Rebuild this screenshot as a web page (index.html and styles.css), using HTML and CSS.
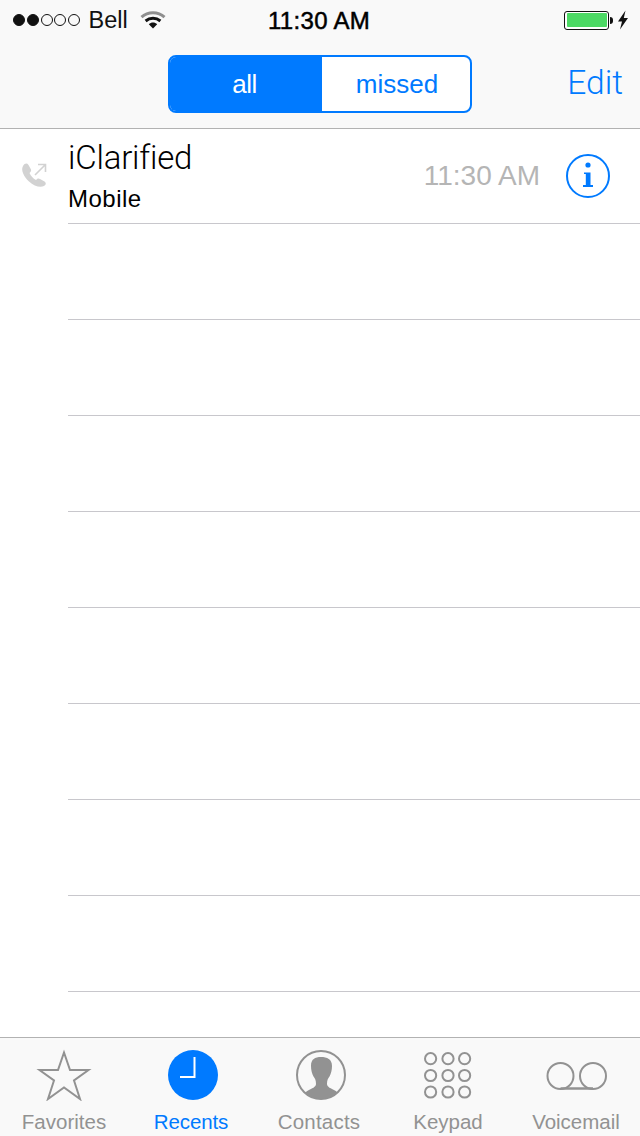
FILE: index.html
```html
<!DOCTYPE html>
<html lang="en">
<head>
<meta charset="utf-8">
<title>Recents</title>
<link rel="stylesheet" href="styles.css">
</head>
<body>
<div class="phone">
  <header class="top">
    <div class="status">
      <div class="status-left">
        <div class="signal"><i class="dot on"></i><i class="dot on"></i><i class="dot"></i><i class="dot"></i><i class="dot"></i></div>
        <span class="carrier">Bell</span>
        <svg class="wifi" width="26" height="20" viewBox="0 0 26 20"><path d="M1.500 7.200C8 1.400 18 1.400 24.500 7.200" fill="none" stroke="#8f8f8f" stroke-width="3"/><path d="M5.600 11C10 7.400 16 7.400 20.400 11" fill="none" stroke="#111" stroke-width="3"/><path d="M8.800 14.200C11.300 12 14.700 12 17.200 14.200L13 18.600Z" fill="#111"/></svg>
      </div>
      <span class="clock">11:30 AM</span>
      <div class="status-right">
        <div class="battery"><div class="battery-fill"></div></div>
        <div class="battery-tip"></div>
        <svg class="bolt" width="12" height="20" viewBox="0 0 12 20"><path d="M8.500 0.500L1 11.500H5L3 19.500L11 8H6.800Z" fill="#111"/></svg>
      </div>
    </div>
    <div class="nav">
      <div class="segments">
        <div class="segment active">all</div>
        <div class="segment">missed</div>
      </div>
      <span class="edit">Edit</span>
    </div>
  </header>

  <main class="list">
    <div class="row first">
      <svg class="call-icon" width="28" height="28" viewBox="0 0 28 28"><path d="M3 4C5 1 7 1 8.500 3L11 7.500C11.500 9 10.500 10 9.500 11C11 14 13 16.500 16 18C17 16.500 18.500 16 20 17L24.500 19.500C26.500 21 26 23 24 24C20 26 14 24 9 19.500C4 15 .5 8 3 4Z" fill="#d2d2d2"/><path d="M15 13L25.500 2.500M18 2.500H25.500V10" fill="none" stroke="#d2d2d2" stroke-width="1.600"/></svg>
      <div class="row-body">
        <div class="who">
          <div class="name">iClarified</div>
          <div class="kind">Mobile</div>
        </div>
        <span class="time">11:30 AM</span>
        <svg class="info" width="46" height="46" viewBox="0 0 46 46"><circle cx="23" cy="23" r="21" fill="none" stroke="#007aff" stroke-width="2"/><circle cx="23" cy="12" r="2.600" fill="#007aff"/><path d="M19 19.500H25.500V32H28V34H18V32H20.800V21H19Z" fill="#007aff"/></svg>
      </div>
    </div>
    <div class="row"></div>
    <div class="row"></div>
    <div class="row"></div>
    <div class="row"></div>
    <div class="row"></div>
    <div class="row"></div>
    <div class="row"></div>
    <div class="row"></div>
  </main>

  <nav class="tabs">
    <div class="tab">
      <svg class="tab-icon" width="56" height="52" viewBox="0 0 56 52"><path d="M28 3.500L34 21H52.500L38 31.500L44 50L28 38.500L12 50L18 31.500L3.500 21H22Z" fill="none" stroke="#929292" stroke-width="2"/></svg>
      <span class="tab-label">Favorites</span>
    </div>
    <div class="tab current">
      <svg class="tab-icon" width="52" height="52" viewBox="-1 0 52 52"><circle cx="26" cy="26" r="25" fill="#007aff"/><path d="M27.500 8V28H13" fill="none" stroke="#fff" stroke-width="2"/></svg>
      <span class="tab-label">Recents</span>
    </div>
    <div class="tab contacts">
      <svg class="tab-icon" width="52" height="52" viewBox="-1 0 52 52"><defs><clipPath id="disc"><circle cx="26" cy="26" r="24"/></clipPath></defs><circle cx="26" cy="26" r="24" fill="none" stroke="#929292" stroke-width="2"/><path clip-path="url(#disc)" d="M16 17C16 10 20 8 26 8S37 10 37 17C37 21 36 25 34.500 27.500C33 29.500 32 31 32 35C32 38 36 39.500 40 41.500C42 42.500 43.500 44 45 48V52H8V48C9 44 11 42.500 13 41.500C17 39.500 21 38 21 35C21 31 20 29.500 18.500 27.500C17 25 16 21 16 17Z" fill="#929292"/></svg>
      <span class="tab-label">Contacts</span>
    </div>
    <div class="tab">
      <svg class="tab-icon" width="52" height="52" viewBox="0 0 52 52"><g fill="none" stroke="#929292" stroke-width="2"><circle cx="8.600" cy="9.700" r="5.600"/><circle cx="26" cy="9.700" r="5.600"/><circle cx="42.600" cy="9.700" r="5.600"/><circle cx="8.600" cy="26.500" r="5.600"/><circle cx="26" cy="26.500" r="5.600"/><circle cx="42.600" cy="26.500" r="5.600"/><circle cx="8.600" cy="43" r="5.600"/><circle cx="26" cy="43" r="5.600"/><circle cx="42.600" cy="43" r="5.600"/></g></svg>
      <span class="tab-label">Keypad</span>
    </div>
    <div class="tab">
      <svg class="tab-icon" width="62" height="52" viewBox="0 0 62 52"><g fill="none" stroke="#929292" stroke-width="2"><circle cx="15.500" cy="27" r="13"/><circle cx="48" cy="27" r="13"/></g><path d="M15.500 39.500H48" stroke="#929292" stroke-width="2.600"/></svg>
      <span class="tab-label">Voicemail</span>
    </div>
  </nav>
</div>
</body>
</html>
```
FILE: styles.css
```css
* { box-sizing: border-box; }
html, body { margin: 0; padding: 0; background: #fff; }
.phone {
  width: 640px;
  height: 1136px;
  display: flex;
  flex-direction: column;
  overflow: hidden;
  font-family: "Liberation Sans", Arial, sans-serif;
  color: #000;
}
.top {
  height: 129px;
  flex: none;
  background: #f9f9f9;
  border-bottom: 1px solid #b2b2b2;
}
.status {
  height: 40px;
  padding: 0 11px 0 13px;
  display: flex;
  align-items: center;
  justify-content: space-between;
  position: relative;
}
.status-left, .status-right { display: flex; align-items: center; }
.signal { display: flex; gap: 1.750px; }
.dot {
  width: 12px;
  height: 12px;
  border-radius: 50%;
  border: 1px solid #111;
}
.dot.on { background: #111; }
.carrier { font-size: 23.500px; margin-left: 8.500px; color: #111; }
.wifi { margin-left: 12.500px; }
.clock {
  position: absolute;
  left: 268px;
  top: 7px;
  font-size: 24px;
  line-height: 28px;
  font-weight: 400;
  -webkit-text-stroke: 0.5px #000;
  letter-spacing: 0.3px;
  white-space: nowrap;
}
.battery {
  width: 45px;
  height: 19px;
  border: 1.500px solid #111;
  border-radius: 3px;
  padding: 1.500px;
  background: #fff;
}
.battery-fill { height: 100%; background: #4cd964; border-radius: 1px; }
.battery-tip {
  width: 3px;
  height: 7px;
  margin-left: 1px;
  background: #111;
  border-radius: 0 3px 3px 0;
}
.bolt { margin-left: 4px; }
.nav {
  height: 88px;
  padding: 15px 17px 0 168px;
  display: flex;
  align-items: flex-start;
  justify-content: space-between;
}
.segments {
  width: 304px;
  height: 58px;
  display: flex;
  border: 2px solid #007aff;
  border-radius: 8px;
  overflow: hidden;
  background: #fff;
}
.segment {
  display: flex;
  align-items: center;
  justify-content: center;
  flex: 1 1 0;
  padding-left: 2px;
  font-size: 26px;
  color: #007aff;
}
.segment.active {
  flex: none;
  width: 152px;
  padding: 0 3px 0 0;
  background: #007aff;
  color: #fff;
  letter-spacing: -0.5px;
}
.edit {
  font-family: Roboto, "Liberation Sans", sans-serif;
  font-weight: 300;
  font-size: 33.500px;
  line-height: 56px;
  color: #007aff;
}
.list { flex: 1 1 auto; background: #fff; padding-left: 68px; }
.row {
  height: 96px;
  border-bottom: 1px solid #c8c7cc;
}
.row.first {
  height: 95px;
  position: relative;
}
.call-icon { position: absolute; left: -48px; top: 33px; }
.row-body {
  height: 100%;
  display: flex;
  align-items: center;
}
.who { flex: 1 1 auto; padding-bottom: 8px; }
.name {
  font-family: Roboto, "Liberation Sans", sans-serif;
  font-weight: 300;
  font-size: 33px;
  letter-spacing: -0.2px;
  line-height: 50px;
  height: 53px;
}
.kind { font-size: 24px; line-height: 26px; letter-spacing: 0.5px; }
.time {
  font-size: 28px;
  color: #b5b5b5;
}
.info { margin: -1px 29px 0 25px; }
.tabs {
  height: 99px;
  flex: none;
  display: flex;
  background: #f9f9f9;
  border-top: 1px solid #b2b2b2;
}
.tab {
  width: 128px;
  display: flex;
  flex-direction: column;
  align-items: center;
  padding-top: 11px;
  color: #929292;
}
.tab.current { color: #007aff; }
.tab-icon { display: block; flex: none; height: 52px; }
.tab-label { font-size: 20.500px; line-height: 24px; margin-top: 9px; }
.current .tab-label { margin-right: 2px; letter-spacing: -0.1px; }
.contacts .tab-label { margin-right: 2px; letter-spacing: 0.2px; }
```
